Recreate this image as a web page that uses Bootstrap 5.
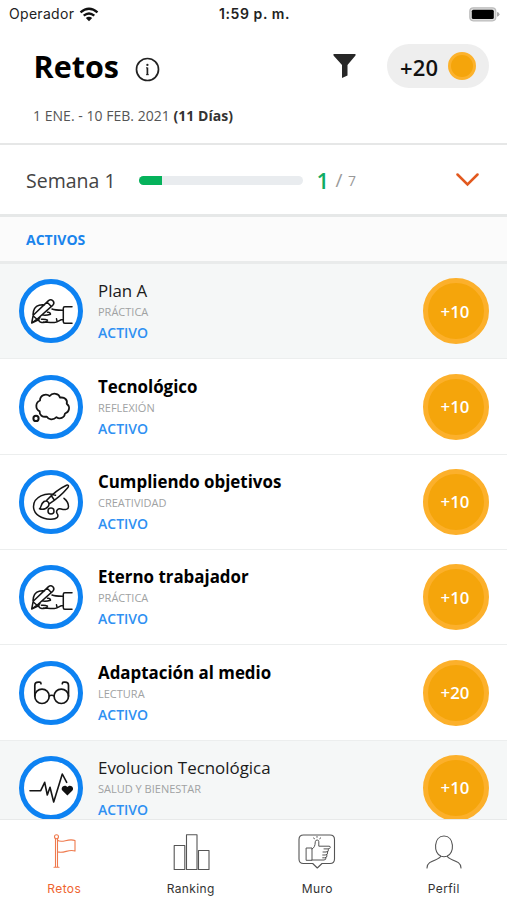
<!DOCTYPE html>
<html lang="es">
<head>
<meta charset="utf-8">
<meta name="viewport" content="width=device-width, initial-scale=1">
<title>Retos</title>
<link href="https://cdn.jsdelivr.net/npm/bootstrap@5.3.0/dist/css/bootstrap.min.css" rel="stylesheet">
<script src="https://cdn.jsdelivr.net/npm/bootstrap@5.3.0/dist/js/bootstrap.bundle.min.js" defer></script>
<style>
  body { font-family: "Open Sans", "Noto Sans", sans-serif; color: #111; background: #fff; }
  .screen { height: 900px; }
  svg { display: block; flex: none; }
  .status { height: 28px; flex: none; padding: 0 7px 0 9px; font: 14px/28px Inter, "Liberation Sans", sans-serif; color: #222; display: grid; grid-template-columns: 1fr auto 1fr; align-items: center; }
  .status-name { margin-right: 5px; letter-spacing: .3px; }
  .status-time { font-weight: 600; letter-spacing: .6px; }
  .top-head { height: 114.5px; flex: none; padding: 15.5px 18px 0 33.5px; }
  .top-title { font-size: 30.5px; font-weight: 700; line-height: 45px; color: #000; }
  .info-icon { margin: 6px 0 0 16.5px; }
  .filter-icon { margin-right: 23px; }
  .points { width: 102px; height: 44px; border-radius: 22px; background: #eee; font-size: 22px; font-weight: 600; color: #111; padding: 2px 13px 0; letter-spacing: .2px; }
  .mini-coin { width: 28px; height: 28px; border: 3px solid #fcb22c; background: #f5a50b; border-radius: 50%; margin-top: -2px; }
  .dates { font-size: 14px; letter-spacing: .03px; line-height: 20px; color: #555; margin-top: 17.5px; margin-left: -.5px; }
  .dates b { color: #333; }
  .week { height: 74.5px; border-top: 2px solid #e6e7e7; border-bottom: 3px solid #e6e8e8; padding: 2px 28.500px 0 26px; }
  .week-name { font-size: 19.5px; color: #444; width: 113px; padding-top: 1px; }
  .week-bar { width: 164px; height: 9px; border-radius: 5px; background: #e9ecef; }
  .week-bar .progress-bar { background: #05b25b; }
  .week-count { margin-left: 13.5px; }
  .week-done { font-size: 22px; font-weight: 600; color: #10ac63; line-height: 30px; width: 19px; }
  .week-slash { font-size: 19px; color: #999; width: 12.5px; }
  .week-total { font-size: 14px; color: #999; }
  .section-head { height: 47px; border-bottom: 3px solid #e9ebeb; background: #fbfbfb; color: #1a84ec; font-size: 14px; font-weight: 700; padding: 0 0 0 26px; }
  .task-list { min-height: 0; }
  .task { height: 95.35px; padding: 0 18.500px 0 19px; border-bottom: 1.5px solid #eceeee; flex: none; }
  .task.seen { background: #f5f7f7; }
  .ring { width: 64px; height: 64px; border-radius: 50%; background: #fff; border: 5px solid #0d82f2; flex: none; }
  .ring svg { width: 64px; height: 64px; margin: -5px; fill: none; stroke: #151515; stroke-width: 1.5; stroke-linecap: round; stroke-linejoin: round; }
  .task-text { margin-left: 15px; padding-top: 1px; line-height: 21px; }
  .task-name { font-size: 16.9px; font-weight: 700; color: #000; }
  .seen .task-name { font-weight: 400; color: #1b1b1b; }
  .task-kind { font-size: 11px; color: #a0a2a3; }
  .task-state { font-size: 14px; font-weight: 600; color: #2e90f2; }
  .coin { width: 66px; height: 66px; border-radius: 50%; border: 5px solid #fcb02b; background: #f5a50b; color: #fff; font-size: 16.8px; font-weight: 600; padding-right: 1px; }
  .tabs { height: 81.5px; border-top: 1px solid #e8eaea; background: #fff; font: 12px/16px Inter, "Liberation Sans", sans-serif; letter-spacing: .4px; color: #333; flex: none; }
  .tabs svg { width: 40px; height: 40px; margin: 11px 0 10px; fill: none; stroke: #555; stroke-width: 1.1; stroke-linejoin: round; stroke-linecap: round; }
  .tabs .current { color: #ef6430; padding-left: 1px; }
  .tabs .current svg { stroke: #ef7a4d; }
</style>
</head>
<body>
<svg width="0" height="0" class="position-absolute" aria-hidden="true">
  <symbol id="i-hand" viewBox="0 0 64 64">
    <path d="M53 27.700h-7.200q-1.500 0-1.500 1.500v13.600q0 1.500 1.500 1.500H53M33 30c3 1.300 7 1.200 11 1.200M44 40.500c-3 0-4.500 2.200-7.500 2.800-4 .6-8-.3-12-.4M12.700 44l1.500-7.800L29.500 21.600q2.300-1.800 4.400.2 2 2.200 0 4.300L18 40.200zM14 36.800l3.700 3.200M28 23l4.300 4.500M14 35.500c.3-5 2.400-8.300 6-9.300 2.300-.7 4-.7 5.500-.3M23 35.800c3.500.9 6 .2 8.500-.6-.2-1.500-1.300-2.200-3-2M12.700 44l6.300-3M21 38.700c-1.800 1-1.500 3.500.3 4.300 2.200.9 5 .5 6.700-.7M22.500 40.200c2.500-.2 4.500.1 6 1M37.500 39.800l.5 2.300"/>
  </symbol>
  <symbol id="i-cloud" viewBox="0 0 64 64">
    <path stroke-width="1.800" d="M21 25.500c0-5.500 6-7.500 9.700-4.500 3-4 9.500-2.500 10.300 1.700 4.800-1 7.800 2.500 6.700 6 3.800 2.800 2.800 8.500-1.700 9.800-.5 4.500-5.200 6-8.500 3.700-3.200 3.200-8.200 2.600-9.700-.6-4.300.8-7.600-1.600-7.100-5.200-4.600-2.300-4.500-8.800.3-10.900z"/><circle stroke-width="2" cx="17" cy="43.400" r="2.600"/>
  </symbol>
  <symbol id="i-palette" viewBox="0 0 64 64">
    <path d="M36.500 25.200C27 21.500 14.500 27 14.500 36.500c0 8 8.500 13 17.500 12.700 6.500-.2 8-2.700 6.200-5.500-1.700-2.800.5-5.700 4-4.700 3.500 1 7.500.8 7.300-2.500-.1-3.500-2-6.300-4.500-8.200M20.500 38.800c1.800-.5 1-5 4.500-7.300 2.500-1.500 5 .3 5 2.800-.2 3.700-5.500 6-9.500 4.500zM27.500 30.500C33 24.500 41 18.200 47.500 15.200q1.800-.5 2 .7 0 1-1 2.100C43.500 24 37 29.500 30.200 33.800M32.500 26l2.300 3.300"/><circle cx="32" cy="41" r="3"/>
  </symbol>
  <symbol id="i-glasses" viewBox="0 0 64 64">
    <g stroke-width="1.700"><circle cx="23" cy="35.300" r="7.200"/><circle cx="42.300" cy="35.300" r="7.200"/><path d="M30.200 35c1-1 4-1 5 0M15.800 35V24.500q0-3.300 3.500-3.300h1.200q1.500 0 1.500 1.500M49.500 35V24.500q0-3.300-3.500-3.300h-1.200q-1.500 0-1.500 1.500"/></g>
  </symbol>
  <symbol id="i-pulse" viewBox="0 0 64 64">
    <path stroke-width="1.600" d="M11 34.700h10.700l4-8.400L28.300 39l2.700-7.700L34.700 46l8.600-28 4.400 8.300"/><path fill="#111" stroke="none" d="M48.400 39.600l-4.800-4.800c-2.800-3 1.700-7.400 4.800-3.800 3.100-3.600 7.600.8 4.800 3.800z"/>
  </symbol>
</svg>

<div class="screen d-flex flex-column overflow-hidden">
  <div class="status">
    <div class="d-flex align-items-center"><span class="status-name">Operador</span>
      <svg width="20" height="15" viewBox="0 0 20 15" fill="none" stroke="#111" stroke-width="2.300"><path d="M1.500 5.300q8.500-7.200 17 0M4.700 8.700q5.300-4.400 10.600 0"/><path fill="#111" stroke="none" d="M6.800 11q3.200-2.400 6.400 0L10 14.300z"/></svg>
    </div>
    <span class="status-time">1:59 p. m.</span>
    <svg class="ms-auto" width="31" height="15" viewBox="0 0 31 15"><rect x=".8" y=".8" width="26" height="13" rx="3.500" fill="#ddd" stroke="#bbb" stroke-width="1.200"/><rect x="2.800" y="2.700" width="22" height="9.200" rx="1.500"/><path d="M28 5q2.500.5 2.500 2.300T28 9.700z" fill="#aaa"/></svg>
  </div>

  <header class="top-head">
    <div class="d-flex align-items-center">
      <h1 class="top-title m-0">Retos</h1>
      <svg class="info-icon" width="25" height="25" viewBox="0 0 25 25"><circle cx="12.500" cy="12.500" r="11" fill="none" stroke="#222" stroke-width="1.700"/><circle cx="12.400" cy="7.900" r="1.150" fill="#222"/><path d="M12.400 10.500v7.500" fill="none" stroke="#222" stroke-width="1.700"/><path d="M11 10.800h1.400M11 17.700h2.800" stroke="#222" stroke-width=".9"/></svg>
      <svg class="filter-icon ms-auto" width="38" height="26" viewBox="0 0 38 26"><path d="M7.500 1h22v1.500L21.500 12v10.500L16 25V12L7.500 2.500z" fill="#272727"/></svg>
      <div class="points d-flex align-items-center justify-content-between"><span>+20</span><span class="mini-coin"></span></div>
    </div>
    <div class="dates">1 ENE. - 10 FEB. 2021 <b>(11 Días)</b></div>
  </header>

  <section class="week d-flex align-items-center flex-shrink-0">
    <span class="week-name">Semana 1</span>
    <div class="progress week-bar"><div class="progress-bar" style="width:14.300%"></div></div>
    <div class="week-count d-flex align-items-center"><span class="week-done">1</span><span class="week-slash">/</span><span class="week-total">7</span></div>
    <svg class="ms-auto" width="23" height="14" viewBox="0 0 23 14"><path d="M1.500 1.500l10 10 10-10" fill="none" stroke="#e2591f" stroke-width="2.500" stroke-linecap="round"/></svg>
  </section>
  <div class="section-head d-flex align-items-center flex-shrink-0">ACTIVOS</div>

  <main class="task-list flex-grow-1 overflow-hidden d-flex flex-column">
    <article class="task seen d-flex align-items-center"><div class="ring"><svg><use href="#i-hand"/></svg></div><div class="task-text"><div class="task-name">Plan A</div><div class="task-kind">PRÁCTICA</div><div class="task-state">ACTIVO</div></div><div class="coin ms-auto d-flex align-items-center justify-content-center">+10</div></article>
    <article class="task d-flex align-items-center"><div class="ring"><svg><use href="#i-cloud"/></svg></div><div class="task-text"><div class="task-name">Tecnológico</div><div class="task-kind">REFLEXIÓN</div><div class="task-state">ACTIVO</div></div><div class="coin ms-auto d-flex align-items-center justify-content-center">+10</div></article>
    <article class="task d-flex align-items-center"><div class="ring"><svg><use href="#i-palette"/></svg></div><div class="task-text"><div class="task-name">Cumpliendo objetivos</div><div class="task-kind">CREATIVIDAD</div><div class="task-state">ACTIVO</div></div><div class="coin ms-auto d-flex align-items-center justify-content-center">+10</div></article>
    <article class="task d-flex align-items-center"><div class="ring"><svg><use href="#i-hand"/></svg></div><div class="task-text"><div class="task-name">Eterno trabajador</div><div class="task-kind">PRÁCTICA</div><div class="task-state">ACTIVO</div></div><div class="coin ms-auto d-flex align-items-center justify-content-center">+10</div></article>
    <article class="task d-flex align-items-center"><div class="ring"><svg><use href="#i-glasses"/></svg></div><div class="task-text"><div class="task-name">Adaptación al medio</div><div class="task-kind">LECTURA</div><div class="task-state">ACTIVO</div></div><div class="coin ms-auto d-flex align-items-center justify-content-center">+20</div></article>
    <article class="task seen d-flex align-items-center"><div class="ring"><svg><use href="#i-pulse"/></svg></div><div class="task-text"><div class="task-name">Evolucion Tecnológica</div><div class="task-kind">SALUD Y BIENESTAR</div><div class="task-state">ACTIVO</div></div><div class="coin ms-auto d-flex align-items-center justify-content-center">+10</div></article>
  </main>

  <nav class="tabs row g-0">
    <div class="current col d-flex flex-column align-items-center"><svg viewBox="0 0 40 40"><circle cx="12.500" cy="5.700" r="2"/><path d="M11.500 7.700v28.300M13.500 7.700v28.300M10 36.300h5M13.500 9.300c5 3.500 10-2.500 17.500.2v10.600c-6-2.600-11.500 3-17.500.6"/></svg>Retos</div>
    <div class="col d-flex flex-column align-items-center"><svg viewBox="0 0 40 40"><path d="M3.200 14.500h10.600V38.500H3.200zM15.500 3.800H26V38.500H15.500zM27.500 19.500H38v19H27.500z"/></svg>Ranking</div>
    <div class="col d-flex flex-column align-items-center"><svg viewBox="0 0 40 40"><path d="M6.500 4h26.500q4.500 0 4.500 4.500v19.500q0 4.500-4.500 4.500h-8L20.300 37l-4.600-4.500H6.500Q2 32.500 2 28V8.500Q2 4 6.500 4z"/><path stroke-width="1" d="M9.500 17h5.500v12.300H9.500zM15 18c2.500-1.500 3-3 3.300-7.300q.2-1.700 1.900-1.700 1.600 0 1.600 1.700v4.500h10.200q1.500 0 1.300 1.200-.2 1.300-2.300 1.500h-4M31.500 18.500q.6 2.500-2.500 2.500h-3M30.700 21.300q.5 2.700-2.500 2.700h-2.500M30 24.300q.4 2.500-2.300 2.500h-2M29 27q.2 2-2 2H15M17.500 7.700l-1-.7M20 6.300V5.500M22.700 7.700l1-.8"/></svg>Muro</div>
    <div class="col d-flex flex-column align-items-center"><svg viewBox="0 0 40 40"><path d="M20 5c10.500 0 11 17.500 2.800 20.300q-2.800.8-5.600 0C9 22.500 9.500 5 20 5zM16.700 25.200c-.7 4.300-14 3.500-13.700 11.800M23.300 25.200c.7 4.300 14 3.500 13.700 11.800"/></svg>Perfil</div>
  </nav>
</div>
</body>
</html>
